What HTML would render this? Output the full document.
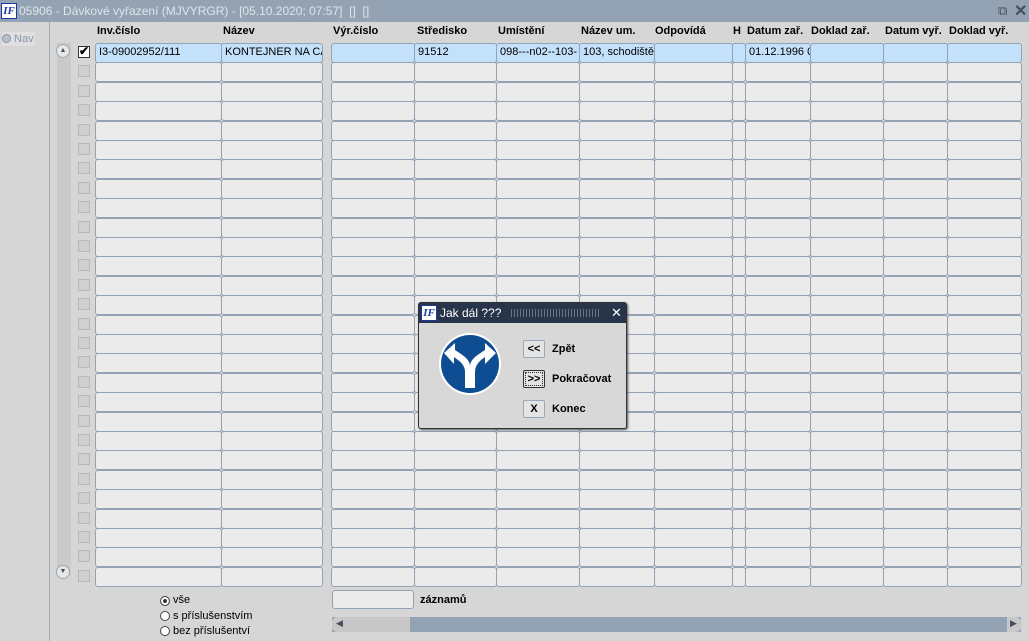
<!DOCTYPE html>
<html><head><meta charset="utf-8"><style>
*{margin:0;padding:0;box-sizing:border-box}
body{width:1029px;height:641px;background:#d6d6d6;font-family:"Liberation Sans",sans-serif;font-size:11px;position:relative;overflow:hidden;color:#000}
.a{position:absolute}
#tb{left:0;top:0;width:1029px;height:22px;background:#94a3b4;color:#dfe4ea;font-size:12px;line-height:22px;padding-left:19px}
.c{position:absolute;background:#ebebeb;border:1.5px solid #94a3b4;border-radius:3px;font-size:11px;line-height:16px;padding-left:3px;white-space:nowrap;overflow:hidden}
.s{background:#c4e1fc}
.cb{position:absolute;width:12px;height:12px;background:#d0d0d0;border:1px solid #b8b8b8}
.h{position:absolute;top:25px;font-weight:bold;font-size:11px}
.btn{position:absolute;left:104px;width:22px;height:18px;background:#e4e4e4;border:1px solid #9aa8b8;border-radius:2px;font-weight:bold;font-size:11px;text-align:center;line-height:16px}
.bl{position:absolute;left:133px;font-weight:bold;font-size:11px}
.r{position:absolute;width:10px;height:10px;border:1px solid #444;border-radius:50%;background:#fff}
</style></head><body>
<div id="tb" class="a">05906 - Dávkové vyřazení (MJVYRGR) - [05.10.2020; 07:57]&nbsp; [] &nbsp;[]</div>
<div class="a" style="left:1px;top:3px;width:16px;height:16px;background:#fff;border:1px solid #1a3aa0;color:#1a3aa0;font:bold italic 11px 'Liberation Serif',serif;text-align:center;line-height:14px">IF</div>
<div class="a" style="left:998px;top:3px;color:#44505e;font-size:13px">⧉</div>
<div class="a" style="left:1014px;top:1px;color:#44505e;font-size:16px;font-weight:bold">✕</div>
<div class="a" style="left:0;top:22px;width:50px;height:619px;border-right:1px solid #a8a8a8;background:#d6d6d6"></div>
<div class="a" style="left:2px;top:32px;width:33px;height:14px;background:#e0e0e0;color:#8a97a8;font-size:11px;line-height:14px"><span style="display:inline-block;width:9px;height:9px;border-radius:50%;border:1px solid #8a97a8;background:#b8c0ca;vertical-align:-1px"></span> Nav</div>
<div class="a" style="left:57px;top:43px;width:14px;height:533px;background:#cacaca"></div>
<div class="a" style="left:56px;top:44px;width:14px;height:14px;border-radius:50%;border:1px solid #9aa8b8;background:#e6e6e6;font-size:7px;text-align:center;line-height:12px;color:#44505e">▲</div>
<div class="a" style="left:56px;top:565px;width:14px;height:14px;border-radius:50%;border:1px solid #9aa8b8;background:#e6e6e6;font-size:7px;text-align:center;line-height:12px;color:#44505e">▼</div>
<div class="h" style="left:97px">Inv.číslo</div>
<div class="h" style="left:223px">Název</div>
<div class="h" style="left:333px">Výr.číslo</div>
<div class="h" style="left:417px">Středisko</div>
<div class="h" style="left:498px">Umístění</div>
<div class="h" style="left:581px">Název um.</div>
<div class="h" style="left:655px">Odpovídá</div>
<div class="h" style="left:733px">H</div>
<div class="h" style="left:747px">Datum zař.</div>
<div class="h" style="left:811px">Doklad zař.</div>
<div class="h" style="left:885px">Datum vyř.</div>
<div class="h" style="left:949px">Doklad vyř.</div>
<div id="g"></div>
<script>
var cols=[[95,222],[221,323],[331,415],[414,497],[496,580],[579,655],[654,733],[732,746],[745,811],[810,884],[883,948],[947,1022]];
var txt=["I3-09002952/111","KONTEJNER NA CA.","","91512","098---n02--103-","103, schodiště","","","01.12.1996 0","","",""];
var h="";
for(var r=0;r<28;r++){var y=Math.round(43+r*19.4);
h+='<div class="cb" style="left:78px;top:'+(y+3)+'px'+(r==0?';background:#fff;border-color:#333':'')+'">'+(r==0?'<span style="position:absolute;left:0;top:-3px;font-size:12px;font-weight:bold">✔</span>':'')+'</div>';
for(var c=0;c<cols.length;c++){h+='<div class="c'+(r==0?' s':'')+'" style="left:'+cols[c][0]+'px;top:'+y+'px;width:'+(cols[c][1]-cols[c][0])+'px;height:20px">'+(r==0?txt[c]:'')+'</div>';}}
document.getElementById('g').innerHTML=h;
</script>
<div class="r" style="left:160px;top:596px;background:#2a3444;box-shadow:inset 0 0 0 2px #fff"></div><div class="a" style="left:173px;top:594px">vše</div>
<div class="r" style="left:160px;top:611px"></div><div class="a" style="left:173px;top:610px">s příslušenstvím</div>
<div class="r" style="left:160px;top:626px"></div><div class="a" style="left:173px;top:625px">bez příslušentví</div>
<div class="c" style="left:332px;top:590px;width:82px;height:19px"></div>
<div class="a" style="left:420px;top:594px;font-weight:bold">záznamů</div>
<div class="a" style="left:332px;top:617px;width:689px;height:15px;background:#94a3b4"></div>
<div class="a" style="left:332px;top:617px;width:78px;height:15px;background:#c8c8c8;border-radius:5px 0 0 5px"></div>
<div class="a" style="left:336px;top:618px;font-size:9px;color:#44505e">◀</div>
<div class="a" style="left:1007px;top:617px;width:14px;height:15px;background:#c8c8c8;border-radius:0 5px 5px 0;font-size:9px;color:#44505e;padding:1px 0 0 3px">▶</div>
<div class="a" style="left:418px;top:302px;width:209px;height:127px;background:#d8d8d8;border:1px solid #333;border-radius:3px;box-shadow:1px 1px 2px #555">
<div class="a" style="left:0;top:0;width:207px;height:20px;background:#27344a;color:#fff;font-size:12px;line-height:20px;padding-left:21px">Jak dál ???<span style="position:absolute;left:92px;top:6px;width:90px;height:8px;background:repeating-linear-gradient(90deg,#6a7488 0 1px,transparent 1px 3px)"></span><span style="position:absolute;left:192px;top:0;font-size:13px">✕</span></div>
<div class="a" style="left:2px;top:2px;width:16px;height:16px;background:#fff;border:1px solid #1a3aa0;color:#1a3aa0;font:bold italic 11px 'Liberation Serif',serif;text-align:center;line-height:14px">IF</div>
<svg class="a" style="left:19px;top:29px" width="64" height="64" viewBox="0 0 64 64"><circle cx="32" cy="32" r="31" fill="#fff"/><circle cx="32" cy="32" r="29" fill="#0f4d92"/><path d="M27 56V40Q27 33 20 28L16 25V32L6 21L17 11V18L23 22Q32 28 32 34Q32 28 41 22L47 18V11L58 21L47 32V25L43 28Q37 33 37 40V56Z" fill="#fff"/></svg>
<div class="btn" style="top:37px">&lt;&lt;</div><div class="bl" style="top:40px">Zpět</div>
<div class="btn" style="top:67px;border:1px solid #333;outline:1px dotted #333;outline-offset:-3px">&gt;&gt;</div><div class="bl" style="top:70px">Pokračovat</div>
<div class="btn" style="top:97px">X</div><div class="bl" style="top:100px">Konec</div>
</div>
</body></html>
